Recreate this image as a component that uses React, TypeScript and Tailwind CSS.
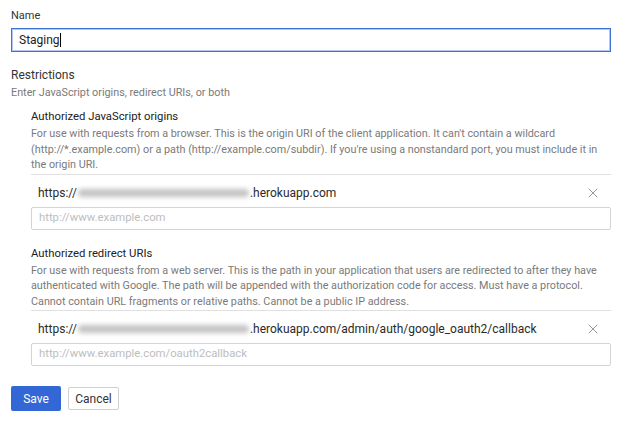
import { X } from "lucide-react";

function Blur({ width }: { width: number }) {
  return (
    <span
      className="inline-block h-[8px] rounded-full bg-[#c2c2c2] blur-[2.5px] align-middle mx-[1px]"
      style={{ width }}
    />
  );
}

function UriSection({
  title,
  desc,
  host,
  path,
  placeholder,
  blurWidth,
}: {
  title: string;
  desc: string;
  host: string;
  path: string;
  placeholder: string;
  blurWidth: number;
}) {
  return (
    <div>
      <div className="text-[11.3px] leading-[16px] text-[#212121]">{title}</div>
      <p className="mt-[1px] text-[10.8px] leading-[15.5px] text-[#7a7a7a]">{desc}</p>
      <div className="mt-[1px] border-t border-[#e0e0e0] h-[33px] pt-[4px] flex items-center justify-between pl-[7px] pr-[10px]">
        <div className="text-[12px] text-[#2a2a2a] flex items-center">
          <span>https://</span>
          <Blur width={blurWidth} />
          <span>{host}{path}</span>
        </div>
        <X size={16} strokeWidth={1.3} className="text-[#8a8a8a]" />
      </div>
      <div className="h-[23px] border border-[#d4d4d4] rounded-[2px] flex items-center px-[7px] text-[11.3px] text-[#bdbdbd]">
        {placeholder}
      </div>
    </div>
  );
}

export default function App() {
  return (
    <div className="w-[639px] h-[430px] bg-white px-[11px] pt-[8px] font-['Roboto',sans-serif]">
      <div className="text-[11px] leading-[16px] text-[#333]">Name</div>
      <div className="mt-[4px] w-[600px] h-[24px] border border-[#3b73d9] ring-1 ring-inset ring-[#3b73d9]/40 flex items-center px-[7px] text-[12px] text-[#212121]">
        Staging<span className="w-px h-[14px] bg-black" />
      </div>

      <div className="mt-[15px] text-[12px] leading-[16px] text-[#333]">Restrictions</div>
      <div className="mt-[2px] text-[10.8px] leading-[16px] text-[#7a7a7a]">
        Enter JavaScript origins, redirect URIs, or both
      </div>

      <div className="pl-[20px] w-[600px]">
        <div className="mt-[8px]">
          <UriSection
            title="Authorized JavaScript origins"
            desc="For use with requests from a browser. This is the origin URI of the client application. It can't contain a wildcard (http://*.example.com) or a path (http://example.com/subdir). If you're using a nonstandard port, you must include it in the origin URI."
            host=".herokuapp.com"
            path=""
            placeholder="http://www.example.com"
            blurWidth={171}
          />
        </div>
        <div className="mt-[16px]">
          <UriSection
            title="Authorized redirect URIs"
            desc="For use with requests from a web server. This is the path in your application that users are redirected to after they have authenticated with Google. The path will be appended with the authorization code for access. Must have a protocol. Cannot contain URL fragments or relative paths. Cannot be a public IP address."
            host=".herokuapp.com"
            path="/admin/auth/google_oauth2/callback"
            placeholder="http://www.example.com/oauth2callback"
            blurWidth={171}
          />
        </div>
      </div>

      <div className="mt-[20px] flex items-center gap-[7px]">
        <button className="w-[50px] h-[25px] rounded-[2px] bg-[#3367d6] text-white text-[12px]">
          Save
        </button>
        <button className="w-[51px] h-[23px] rounded-[2px] border border-[#d0d0d0] bg-white text-[#333] text-[12px]">
          Cancel
        </button>
      </div>
    </div>
  );
}
